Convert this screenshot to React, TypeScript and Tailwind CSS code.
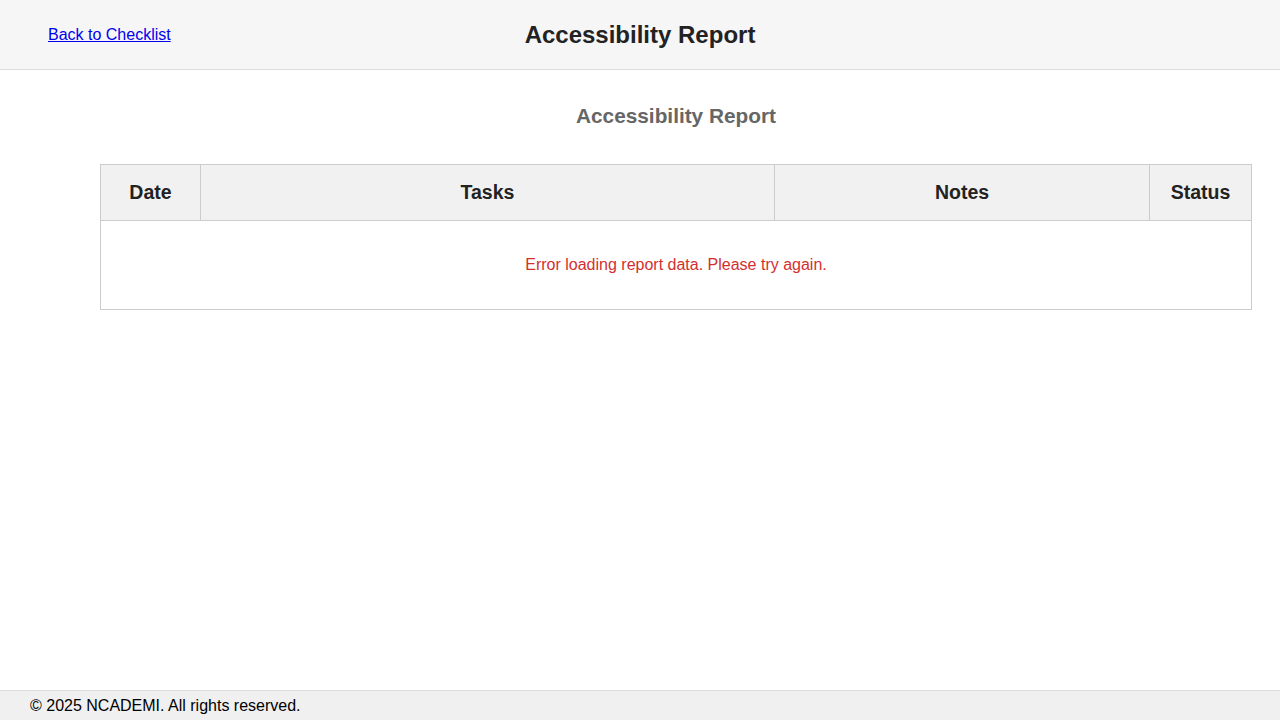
import React from "react";

export default function App() {
  const font = { fontFamily: '"Liberation Sans", Arial, Helvetica, sans-serif' };
  return (
    <div className="min-h-[720px] bg-white" style={font}>
      <header className="grid h-[70px] grid-cols-[1fr_auto_1fr] items-center border-b border-[#dddddd] bg-[#f6f6f6]">
        <div className="pl-[48px]">
          <a href="#" className="text-[16px] leading-[20px] text-[#0000ee] underline">
            Back to Checklist
          </a>
        </div>
        <h1 className="text-[24px] font-bold leading-[28px] text-[#222222]">Accessibility Report</h1>
        <div />
      </header>

      <main className="pl-[100px] pr-[28px] pt-[34px]">
        <h2 className="mb-[36px] text-center text-[20.8px] font-bold leading-[24px] text-[#666666]">
          Accessibility Report
        </h2>
        <div className="border border-[#cccccc]">
          <div className="grid grid-cols-[100px_574px_375px_1fr] border-b border-[#cccccc] bg-[#f1f1f1]">
            {["Date", "Tasks", "Notes", "Status"].map((h, i) => (
              <div
                key={h}
                className={
                  i < 3
                    ? "flex h-[55px] items-center justify-center border-r border-[#cccccc] text-[19.5px] font-bold text-[#222222]"
                    : "flex h-[55px] items-center justify-center text-[19.5px] font-bold text-[#222222]"
                }
              >
                {h}
              </div>
            ))}
          </div>
          <div className="flex h-[88px] items-center justify-center text-[16px] text-[#d32f2f]">
            Error loading report data. Please try again.
          </div>
        </div>
      </main>

      <footer className="fixed bottom-0 left-0 right-0 flex h-[30px] items-center border-t border-[#dddddd] bg-[#f0f0f0] pl-[30px] text-[16px] text-black">
        © 2025 NCADEMI. All rights reserved.
      </footer>
    </div>
  );
}
